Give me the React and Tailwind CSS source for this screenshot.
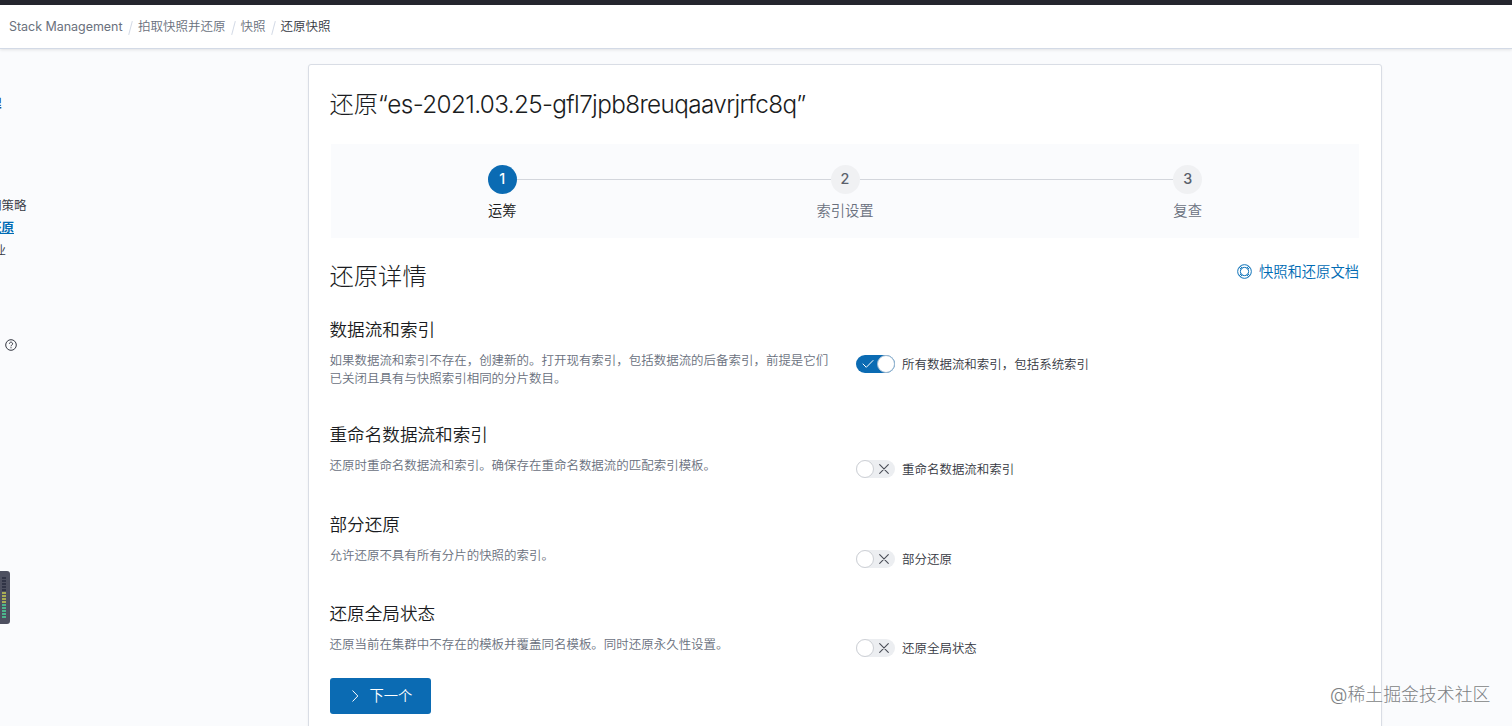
// src/App.jsx
import { useState } from "react"

const BREADCRUMBS = ["Stack Management", "拍取快照并还原", "快照", "还原快照"]

const STEPS = ["运筹", "索引设置", "复查"]

const SETTINGS = [
  {
    id: "indices",
    title: "数据流和索引",
    description: "如果数据流和索引不存在，创建新的。打开现有索引，包括数据流的后备索引，前提是它们已关闭且具有与快照索引相同的分片数目。",
    label: "所有数据流和索引，包括系统索引",
    row: "h-[105.5px]",
  },
  {
    id: "rename",
    title: "重命名数据流和索引",
    description: "还原时重命名数据流和索引。确保存在重命名数据流的匹配索引模板。",
    label: "重命名数据流和索引",
    row: "h-[89.5px]",
  },
  {
    id: "partial",
    title: "部分还原",
    description: "允许还原不具有所有分片的快照的索引。",
    label: "部分还原",
    row: "h-[89.5px]",
  },
  {
    id: "global",
    title: "还原全局状态",
    description: "还原当前在集群中不存在的模板并覆盖同名模板。同时还原永久性设置。",
    label: "还原全局状态",
    row: "h-[76px]",
  },
]

export default function App() {
  const [enabled, setEnabled] = useState({ indices: true })

  function toggle(id) {
    setEnabled(prev => ({ ...prev, [id]: !prev[id] }))
  }

  return (
    <div className="relative flex flex-col h-[726px] overflow-hidden bg-[#fafbfd] text-[#343741] font-['Inter','Noto_Sans_CJK_SC',sans-serif]">
      <div className="h-[5px] shrink-0 bg-[#25262e]" />
      <Header />

      <div className="flex flex-1 min-h-0">
        <Sidebar />

        <main className="w-[1074px] h-[700px] shrink-0 mt-[15px] pl-[20.5px] pr-[22px] bg-white border border-[#d9dde5] rounded-[3px] shadow-[0_1px_3px_rgba(0,0,0,0.05)]">
          <h1 className="mt-[22px] h-[34px] leading-[34px] text-[24.3px] tracking-[-0.63px] font-light text-[#1a1c21] whitespace-nowrap">
            <span className="tracking-normal">还原</span>“es-2021.03.25-gfl7jpb8reuqaavrjrfc8q”
          </h1>

          <Steps />

          <div className="flex justify-between mt-[21px]">
            <h2 className="leading-[34px] text-[24.3px] font-light text-[#1a1c21]">还原详情</h2>
            <a href="#docs" className="flex items-center gap-[7px] h-[26.5px] text-[14.3px] font-[350] text-[#006bb4]">
              <HelpRing />
              快照和还原文档
            </a>
          </div>

          <div className="mt-[25px]">
            {SETTINGS.map(s => (
              <div key={s.id} className={`flex gap-[26.5px] ${s.row}`}>
                <div className="w-[500px]">
                  <h3 className="leading-[24px] text-[17.6px] font-[350] text-[#1a1c21]">{s.title}</h3>
                  <p className="mt-[10px] leading-[18.7px] text-[12.48px] font-[350] text-[#69707d]">{s.description}</p>
                </div>
                <div className="flex items-start gap-[7px] mt-[37px]">
                  <Switch on={!!enabled[s.id]} onClick={() => toggle(s.id)} />
                  <span className="leading-[19px] text-[12.48px] font-[350]">{s.label}</span>
                </div>
              </div>
            ))}
          </div>

          <button className="flex items-center gap-[9px] w-[101px] h-[36px] pl-[19px] rounded-[3px] bg-[#0b6bb3] text-white text-[14.3px] font-[350]">
            <svg viewBox="0 0 12 12" className="w-[12px] h-[12px]" fill="none" stroke="currentColor" strokeWidth="1">
              <path d="M3.8 0.8 8.8 6 3.8 11.2" strokeLinecap="round" />
            </svg>
            下一个
          </button>
        </main>
      </div>

      <LevelMeter />
      <div className="absolute left-[1330px] top-[683px] leading-[24px] text-[17.9px] font-light text-[#7d7f84] whitespace-nowrap">@稀土掘金技术社区</div>
    </div>
  )
}

function Header() {
  return (
    <header className="flex items-center h-[44px] shrink-0 pl-[9px] pt-[2px] bg-white border-b border-[#d3dae6] shadow-[0_1px_3px_rgba(0,0,0,0.1)] text-[12.5px]">
      {BREADCRUMBS.map((item, i) => (
        <div key={item} className="flex items-center">
          {i > 0 && <span className="w-px h-[14px] mx-[7px] rotate-[15deg] bg-[#d3dae6]" />}
          <span className={
            i === BREADCRUMBS.length - 1
              ? "font-[350] text-[#343741]"
              : i === 0
              ? "w-[114px] tracking-[-0.04px] whitespace-nowrap text-[#6a717d]"
              : "font-[350] text-[#6a717d]"
          }>
            {item}
          </span>
        </div>
      ))}
    </header>
  )
}

function Sidebar() {
  return (
    <nav className="w-[308px] shrink-0 overflow-hidden text-[12.5px] leading-[22.5px]">
      <div className="flex justify-end w-[1.5px] mt-[44px] font-bold text-[#1a4f8c] whitespace-nowrap">管理</div>
      <div className="flex justify-end w-[26.5px] mt-[79px] font-[350] whitespace-nowrap">索引生命周期策略</div>
      <div className="flex justify-end w-[14px] font-bold text-[#006bb4] underline whitespace-nowrap">快照和还原</div>
      <div className="flex justify-end w-[6px] font-[350] whitespace-nowrap">汇总/打包作业</div>
      <svg viewBox="0 0 12 12" className="w-[12px] h-[12px] ml-[5px] mt-[77px]" fill="none" stroke="#343741">
        <circle cx="6" cy="6" r="5.3" strokeWidth="1" />
        <path d="M4.4 4.7a1.6 1.6 0 1 1 2.4 1.4c-.6.35-.8.6-.8 1.2" strokeWidth="1" />
        <path d="M6 8.3v1" strokeWidth="1.1" />
      </svg>
    </nav>
  )
}

function Steps() {
  return (
    <div className="grid grid-cols-3 h-[94px] mt-[22.5px] ml-[1.5px] pt-[21px] bg-[#fafbfd]">
      {STEPS.map((step, i) => (
        <div key={step} className="flex flex-col items-center">
          <div className="flex items-center w-full">
            <div className={i > 0 ? "flex-1 h-px bg-[#d3d6dc]" : "flex-1"} />
            <div className={
              "flex items-center justify-center w-[29px] h-[29px] rounded-full text-[14.3px] font-medium " +
              (i === 0 ? "bg-[#0b6bb3] text-white" : "bg-[#f0f1f3] text-[#5a606b]")
            }>
              {i + 1}
            </div>
            <div className={i < STEPS.length - 1 ? "flex-1 h-px bg-[#d3d6dc]" : "flex-1"} />
          </div>
          <div className={"mt-[6px] leading-[21px] text-[14.3px] font-[350] " + (i === 0 ? "text-[#1a1c21]" : "text-[#69707d]")}>
            {step}
          </div>
        </div>
      ))}
    </div>
  )
}

function Switch({ on, onClick }) {
  return (
    <button
      role="switch"
      aria-checked={on}
      onClick={onClick}
      className={"flex items-center justify-between w-[39px] h-[18px] rounded-full " + (on ? "bg-[#0b6bb3] pl-[6px]" : "bg-[#eceef1] pr-[6px]")}
    >
      {on && (
        <svg viewBox="0 0 12 10" className="w-[12px] h-[10px]" fill="none" stroke="#fff" strokeWidth="1">
          <path d="M1 5 4.3 8.3 11 1.5" strokeLinecap="round" />
        </svg>
      )}
      <span className={"w-[18px] h-[18px] rounded-full bg-white border " + (on ? "border-[#9fb9d0]" : "border-[#cdd0d5]")} />
      {!on && (
        <svg viewBox="0 0 10 10" className="w-[10px] h-[10px]" fill="none" stroke="#4a4d57" strokeWidth="1.1">
          <path d="M.7.7 9.3 9.3M9.3.7.7 9.3" strokeLinecap="round" />
        </svg>
      )}
    </button>
  )
}

function HelpRing() {
  return (
    <svg viewBox="0 0 16 16" className="w-[15px] h-[15px]" fill="none" stroke="currentColor" strokeWidth="1">
      <circle cx="8" cy="8" r="7.3" />
      <circle cx="8" cy="8" r="4.4" />
      <path d="M3.6 2.3 5.6 4.6M2.3 3.6 4.6 5.6M12.4 2.3 10.4 4.6M13.7 3.6 11.4 5.6M3.6 13.7 5.6 11.4M2.3 12.4 4.6 10.4M12.4 13.7 10.4 11.4M13.7 12.4 11.4 10.4" />
    </svg>
  )
}

// Small meter docked on the left edge of the window
function LevelMeter() {
  return (
    <div className="absolute left-0 top-[571px] w-[10px] h-[53px] pt-[6px] pl-[2px] rounded-r-[3px] bg-[#4d5060]">
      {Array.from({ length: 14 }, (_, i) => (
        <div
          key={i}
          className={"w-[4px] h-[2px] mb-px " + (i < 5 ? "bg-[#303446]" : i < 9 ? "bg-[#a8ad55]" : "bg-[#4cb58c]")}
        />
      ))}
    </div>
  )
}
